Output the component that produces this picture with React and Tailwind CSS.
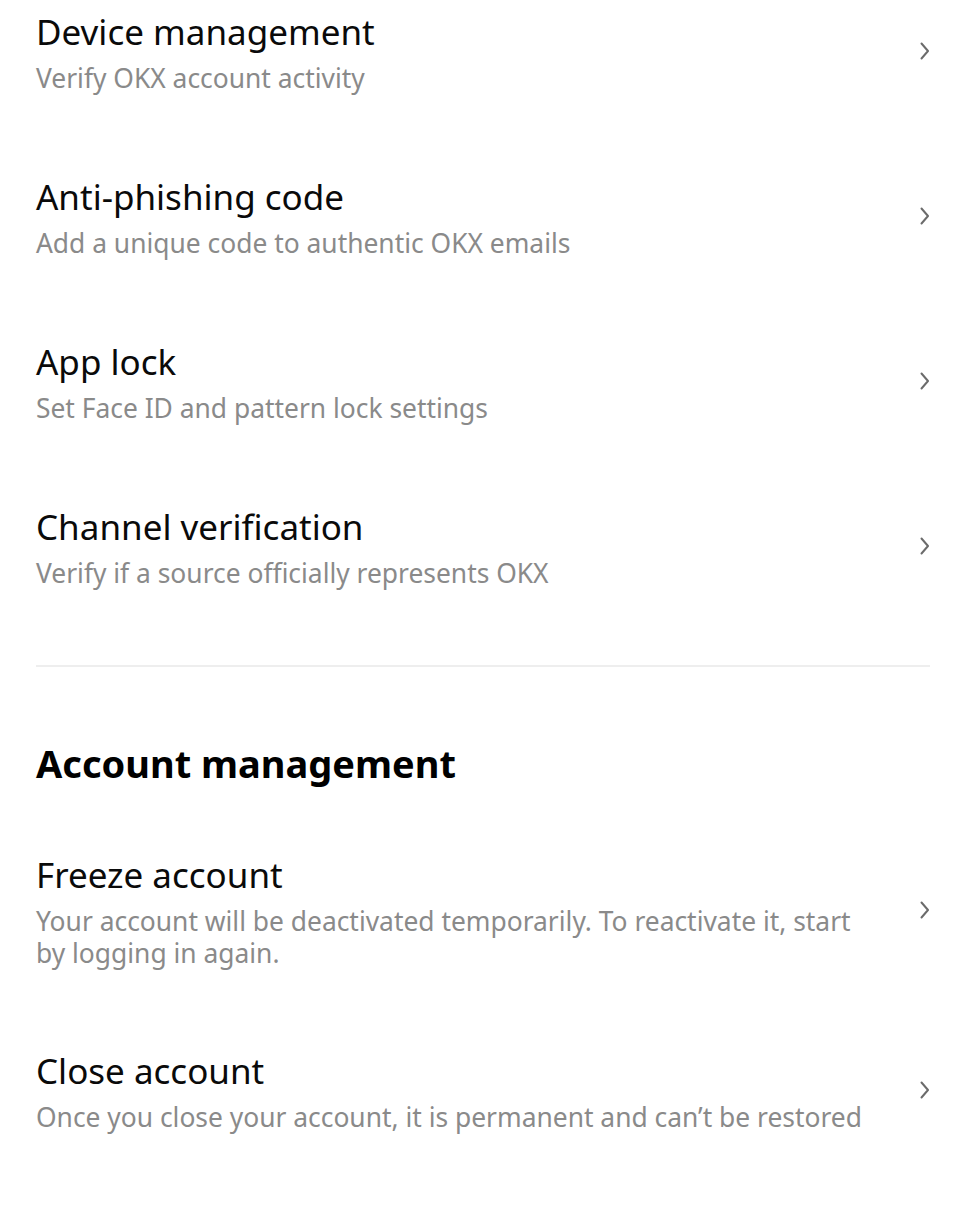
import React from "react";

const Chevron = () => (
  <svg width="10" height="18" viewBox="0 0 10 18" fill="none" className="shrink-0">
    <path d="M1.5 1.5 L8 9 L1.5 16.5" stroke="#6b6b6b" strokeWidth="2" strokeLinecap="round" strokeLinejoin="round" />
  </svg>
);

const Row = ({ title, sub }) => (
  <div className="flex items-center pl-[36px] pr-[36px]">
    <div className="flex-1 pr-[50px]">
      <div className="text-[35px] leading-[48px] text-[#0a0a0a]">{title}</div>
      <div className="mt-[6px] text-[26.4px] leading-[32px] text-[#8a8a8a]">{sub}</div>
    </div>
    <Chevron />
  </div>
);

export default function App() {
  return (
    <div className="w-[966px] h-[1224px] bg-white overflow-hidden" style={{ fontFamily: '"Noto Sans", "Open Sans", sans-serif' }}>
      <div className="pt-[8px] flex flex-col gap-[79px]">
        <Row title="Device management" sub="Verify OKX account activity" />
        <Row title="Anti-phishing code" sub="Add a unique code to authentic OKX emails" />
        <Row title="App lock" sub="Set Face ID and pattern lock settings" />
        <Row title="Channel verification" sub="Verify if a source officially represents OKX" />
      </div>
      <div className="mx-[36px] mt-[76px] h-[2px] bg-[#eeeeee]" />
      <div className="mt-[71px] px-[36px] text-[38px] leading-[50px] font-bold text-black">Account management</div>
      <div className="mt-[63px] flex flex-col gap-[78px]">
        <Row title="Freeze account" sub="Your account will be deactivated temporarily. To reactivate it, start by logging in again." />
        <Row title="Close account" sub="Once you close your account, it is permanent and can’t be restored" />
      </div>
    </div>
  );
}
